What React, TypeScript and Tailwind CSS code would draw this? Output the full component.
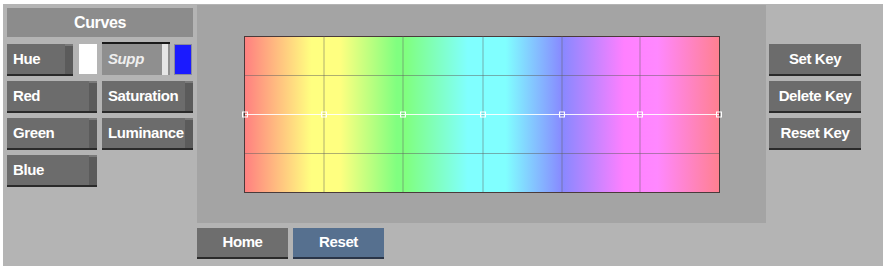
import React from "react";

const font = { fontFamily: '"Liberation Sans", Arial, sans-serif' };

function ToolButton({ label, width }: { label: string; width: string }) {
    return (
        <div className={`${width} h-[32px] flex bg-[#6c6c6c] border-b-2 border-[#2a2a2a]`}>
            <span className="flex-1 flex items-center pl-[6px] text-white font-bold text-[15px] tracking-[-0.4px]">
                {label}
            </span>
            <div className="w-[8px] bg-[#5b5b5b] border-t-2 border-[#7a7a7a]" />
        </div>
    );
}

function KeyButton({ label }: { label: string }) {
    return (
        <div className="w-[92px] h-[32px] flex items-center justify-center bg-[#6c6c6c] border-b-2 border-[#2a2a2a] text-white font-bold text-[15px] tracking-[-0.4px]">
            {label}
        </div>
    );
}

function HueGraph() {
    const cols = [79, 158, 238, 317, 395];
    const handles = [0, 79, 158, 238, 317, 395, 474];
    return (
        <div className="relative w-[476px] h-[157px] border border-[#4a3a3a] bg-[linear-gradient(90deg,#ff8080_0%,#ffff80_14%,#ffff80_20%,#80ff80_32%,#80ff80_34%,#80ffff_47%,#80ffff_55%,#8888ff_67%,#ff80ff_80%,#ff88ff_87%,#ff8090_100%)]">
            <svg className="absolute -left-[4px] -top-[1px] overflow-visible" width="482" height="157">
                {cols.map((x) => (
                    <line key={x} x1={x + 4} y1={0} x2={x + 4} y2={156} stroke="#606060" strokeOpacity={0.5} strokeWidth={1} />
                ))}
                <line x1={4} y1={39.5} x2={478} y2={39.5} stroke="#606060" strokeOpacity={0.5} />
                <line x1={4} y1={117.5} x2={478} y2={117.5} stroke="#606060" strokeOpacity={0.5} />
                <line x1={4} y1={78.5} x2={478} y2={78.5} stroke="#ffffff" strokeOpacity={0.9} />
                {handles.map((x) => (
                    <rect key={x} x={x + 1.5} y={76} width={5} height={5} fill="none" stroke="#ffffff" strokeWidth={1} />
                ))}
            </svg>
        </div>
    );
}

export default function App() {
    return (
        <div className="w-[883px] h-[270px] bg-white pt-[4px] pl-[3px]" style={font}>
            <div className="h-[262px] bg-[#b4b4b4] flex">
                <div className="w-[186px] ml-[4px] pt-[4px] flex flex-col">
                    <div className="h-[29px] bg-[#8c8c8c] flex items-center justify-center text-white font-bold text-[16px] tracking-[-0.4px]">
                        Curves
                    </div>
                    <div className="mt-[7px] flex flex-col gap-[5px]">
                        <div className="flex items-start">
                            <ToolButton label="Hue" width="w-[66px]" />
                            <div className="ml-[6px] w-[18px] h-[30px] bg-white" />
                            <div className="ml-[5px] -mt-[2px] w-[68px] h-[33px] flex bg-[#8f8f8f] border-t-2 border-[#1a1a1a]">
                                <span className="flex-1 flex items-center pl-[6px] text-[#eeeeee] font-bold italic text-[15px] tracking-[-0.4px]">
                                    Supp
                                </span>
                                <div className="w-[6px] bg-[#e6e6e6] mr-[2px]" />
                            </div>
                            <div className="ml-[4px] w-[18px] h-[31px] bg-[#1a1aff] border border-[#8a8a9a]" />
                        </div>
                        <div className="flex gap-[5px]">
                            <ToolButton label="Red" width="w-[90px]" />
                            <ToolButton label="Saturation" width="w-[91px]" />
                        </div>
                        <div className="flex gap-[5px]">
                            <ToolButton label="Green" width="w-[90px]" />
                            <ToolButton label="Luminance" width="w-[91px]" />
                        </div>
                        <div className="flex gap-[5px]">
                            <ToolButton label="Blue" width="w-[90px]" />
                        </div>
                    </div>
                </div>
                <div className="ml-[4px] pt-[1px] flex flex-col">
                    <div className="w-[569px] h-[218px] bg-[#a4a4a4] pl-[47px] pt-[31px]">
                        <HueGraph />
                    </div>
                    <div className="mt-[5px] flex gap-[5px]">
                        <div className="w-[91px] h-[31px] flex items-center justify-center bg-[#6e6e6e] border-b-2 border-[#2a2a2a] text-white font-bold text-[15px] tracking-[-0.4px]">
                            Home
                        </div>
                        <div className="w-[91px] h-[31px] flex items-center justify-center bg-[#56708f] border-b-2 border-[#2a3548] text-white font-bold text-[15px] tracking-[-0.4px]">
                            Reset
                        </div>
                    </div>
                </div>
                <div className="ml-[3px] pt-[40px] flex flex-col gap-[5px]">
                    <KeyButton label="Set Key" />
                    <KeyButton label="Delete Key" />
                    <KeyButton label="Reset Key" />
                </div>
            </div>
        </div>
    );
}
